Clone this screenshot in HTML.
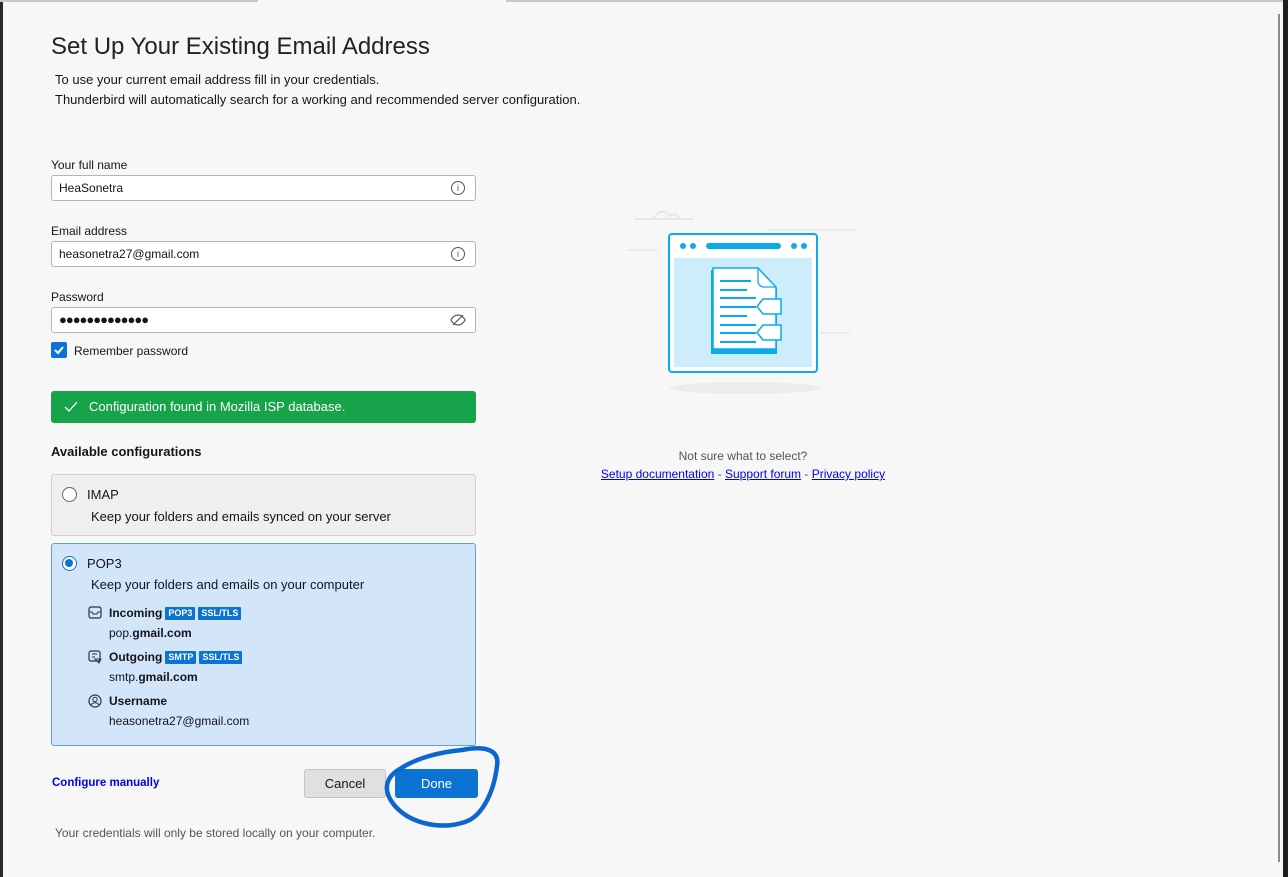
<!DOCTYPE html>
<html><head><meta charset="utf-8"><style>
*{box-sizing:border-box;margin:0;padding:0}
body{width:1288px;height:877px;overflow:hidden;background:#f7f7f7;font-family:"Liberation Sans",sans-serif;color:#15141a;position:relative;font-size:12px}
.abs{position:absolute}
.lbl{position:absolute;left:51px;font-size:12px}
.inp{position:absolute;left:51px;width:425px;height:26px;background:#fff;border:1px solid #b5b5b8;border-radius:3px;padding-left:7px;line-height:24px;font-size:12px}
.ico{position:absolute;right:10px;top:5px;width:14px;height:14px;border:1px solid #555;border-radius:50%;font-size:9px;line-height:12px;text-align:center;color:#555}
.badge{display:inline-block;background:#0b73d4;color:#fff;font-size:9px;font-weight:bold;padding:1px 3px;margin-left:3px;border-radius:1px;line-height:11px;vertical-align:1px}
a{color:#0000ee}
</style></head><body>
<div class="abs" style="left:0;top:0;width:3px;height:877px;background:#2a2a2a"></div>
<div class="abs" style="left:0;top:0;width:1288px;height:2px;background:#c8c8c8"></div>
<div class="abs" style="left:258px;top:0;width:248px;height:2px;background:#f7f7f7"></div>
<div class="abs" style="left:1283px;top:0;width:5px;height:877px;background:#1e1e1e"></div>
<div class="abs" style="left:1278px;top:14px;width:2px;height:848px;background:#8a8a8a"></div>

<div class="abs" style="left:51px;top:33px;font-size:24px;font-weight:300;color:#222">Set Up Your Existing Email Address</div>
<div class="abs" style="left:55px;top:70px;font-size:13px;line-height:20px">To use your current email address fill in your credentials.<br>Thunderbird will automatically search for a working and recommended server configuration.</div>

<div class="lbl" style="top:158px">Your full name</div>
<div class="inp" style="top:175px">HeaSonetra<div class="ico">i</div></div>
<div class="lbl" style="top:224px">Email address</div>
<div class="inp" style="top:241px">heasonetra27@gmail.com<div class="ico">i</div></div>
<div class="lbl" style="top:290px">Password</div>
<div class="inp" style="top:307px;font-size:13px;letter-spacing:-1px">●●●●●●●●●●●●●
<svg class="abs" style="right:9px;top:5px" width="16" height="14" viewBox="0 0 16 14"><path d="M1 7C3 3 6 2 8 2s5 1 7 5c-2 4-5 5-7 5S3 11 1 7z" fill="none" stroke="#555" stroke-width="1.2"/><path d="M3 12L13 2" stroke="#555" stroke-width="1.2"/></svg></div>
<div class="abs" style="left:51px;top:342px;width:16px;height:16px;background:#0b73d4;border-radius:2px"><svg width="16" height="16"><path d="M4 8l3 3 5-6" fill="none" stroke="#fff" stroke-width="2"/></svg></div>
<div class="abs" style="left:74px;top:344px">Remember password</div>

<div class="abs" style="left:51px;top:391px;width:425px;height:32px;background:#17a349;border-radius:3px;color:#fff;font-size:13px;line-height:32px;padding-left:38px">Configuration found in Mozilla ISP database.
<svg class="abs" style="left:13px;top:10px" width="14" height="12"><path d="M1 6l4 4 8-9" fill="none" stroke="#fff" stroke-width="1.3"/></svg></div>

<div class="abs" style="left:51px;top:444px;font-weight:bold;font-size:13px">Available configurations</div>

<div class="abs" style="left:51px;top:474px;width:425px;height:62px;background:#efefef;border:1px solid #cfcfd1;border-radius:3px">
<div class="abs" style="left:10px;top:12px;width:15px;height:15px;border:1px solid #666;border-radius:50%;background:#fff"></div>
<div class="abs" style="left:35px;top:12px;font-size:13px">IMAP</div>
<div class="abs" style="left:39px;top:34px;font-size:13px">Keep your folders and emails synced on your server</div>
</div>

<div class="abs" style="left:51px;top:543px;width:425px;height:203px;background:#d2e5f9;border:1px solid #5aa0ea;border-radius:3px">
<div class="abs" style="left:10px;top:12px;width:15px;height:15px;border:1.5px solid #0b73d4;border-radius:50%;background:#fff"><div style="margin:2px;width:8px;height:8px;border-radius:50%;background:#0b73d4"></div></div>
<div class="abs" style="left:35px;top:12px;font-size:13px">POP3</div>
<div class="abs" style="left:39px;top:33px;font-size:13px">Keep your folders and emails on your computer</div>
<svg class="abs" style="left:36px;top:62px" width="14" height="13"><rect x="1" y="1" width="12" height="11" rx="2" fill="none" stroke="#333" stroke-width="1.2"/><path d="M1 6h3l1 2h4l1-2h3" fill="none" stroke="#333"/></svg>
<div class="abs" style="left:57px;top:62px;font-weight:bold">Incoming<span class="badge">POP3</span><span class="badge">SSL/TLS</span></div>
<div class="abs" style="left:57px;top:82px">pop.<b>gmail.com</b></div>
<svg class="abs" style="left:36px;top:106px" width="14" height="14"><rect x="1" y="1" width="11" height="10" rx="2" fill="none" stroke="#333" stroke-width="1.2"/><path d="M4 4h5M4 7h3M7 9l6 0-2 4z" fill="none" stroke="#333"/></svg>
<div class="abs" style="left:57px;top:106px;font-weight:bold">Outgoing<span class="badge">SMTP</span><span class="badge">SSL/TLS</span></div>
<div class="abs" style="left:57px;top:126px">smtp.<b>gmail.com</b></div>
<svg class="abs" style="left:36px;top:150px" width="14" height="14"><circle cx="7" cy="7" r="6" fill="none" stroke="#333" stroke-width="1.2"/><circle cx="7" cy="5.5" r="2.2" fill="none" stroke="#333"/><path d="M3 11c2-3 6-3 8 0" fill="none" stroke="#333"/></svg>
<div class="abs" style="left:57px;top:150px;font-weight:bold">Username</div>
<div class="abs" style="left:57px;top:170px">heasonetra27@gmail.com</div>
</div>

<div class="abs" style="left:52px;top:777px;color:#0000ee;font-weight:bold;font-size:11.5px">Configure manually</div>
<div class="abs" style="left:304px;top:769px;width:82px;height:29px;background:#e0e0e0;border:1px solid #c4c4c4;border-radius:3px;text-align:center;line-height:27px;font-size:13px">Cancel</div>
<div class="abs" style="left:395px;top:769px;width:83px;height:29px;background:#0b73d4;border-radius:3px;text-align:center;line-height:29px;font-size:13px;color:#fff">Done</div>
<svg class="abs" style="left:378px;top:742px" width="126" height="90"><path d="M84 8C104 4 122 6 119 24c-3 25-14 50-32 56-24 8-54 2-70-16C5 50 6 36 22 27 38 16 62 10 84 8z" fill="none" stroke="#0a67d0" stroke-width="4.5"/></svg>
<div class="abs" style="left:55px;top:826px;font-size:12px;color:#555">Your credentials will only be stored locally on your computer.</div>

<svg class="abs" style="left:620px;top:200px" width="250" height="200">
<path d="M14 19h60M35 19c0-8 12-10 14-3 3-3 10-2 10 3" fill="none" stroke="#e8e8e8" stroke-width="2"/>
<path d="M148 30h88M8 50h30M200 133h30" stroke="#e8e8e8" stroke-width="1.5"/>
<ellipse cx="125" cy="188" rx="75" ry="6" fill="#ececec"/>
<rect x="49" y="34" width="148" height="138" rx="3" fill="#fff" stroke="#0aaaec" stroke-width="2"/>
<rect x="54" y="58" width="138" height="109" fill="#cdedfc"/>
<circle cx="63" cy="46" r="3" fill="#0aaaec"/><circle cx="73" cy="46" r="3" fill="#0aaaec"/>
<circle cx="174" cy="46" r="3" fill="#0aaaec"/><circle cx="184" cy="46" r="3" fill="#0aaaec"/>
<rect x="86" y="43" width="75" height="6" rx="3" fill="#0aaaec"/>
<path d="M91 70h47l19 19v65H91z" fill="#0aaaec"/>
<path d="M93 68h45l18 19v62H93z" fill="#fff" stroke="#0aaaec" stroke-width="1.5"/>
<path d="M138 68v13a6 6 0 0 0 6 6h12" fill="none" stroke="#0aaaec" stroke-width="1.3"/>
<path d="M100 81h31M100 90h27M100 98h36M100 107h36M100 116h27M100 125h36M100 133h36M100 142h36" stroke="#0aaaec" stroke-width="2"/>
<path d="M143 99h18v15h-18l-6-7.5z M143 125h18v15h-18l-6-7.5z" fill="#fff" stroke="#0aaaec" stroke-width="1.5"/>
</svg>
<div class="abs" style="left:580px;top:449px;width:326px;text-align:center;font-size:12px;color:#555">Not sure what to select?</div>
<div class="abs" style="left:580px;top:467px;width:326px;text-align:center;font-size:12px;color:#555"><a style="text-decoration:underline">Setup documentation</a> - <a style="text-decoration:underline">Support forum</a> - <a style="text-decoration:underline">Privacy policy</a></div>
</body></html>
